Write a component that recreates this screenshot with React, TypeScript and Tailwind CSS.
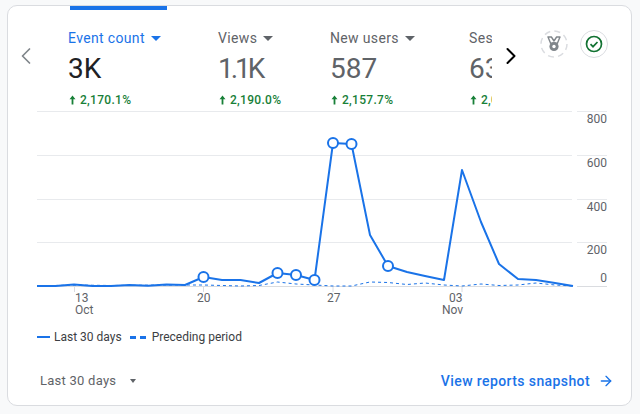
import React from 'react';
import { ArrowRight, ChevronLeft, ChevronRight } from 'lucide-react';

const tabs = [
  { label: 'Event count', value: '3K', change: '2,170.1%', width: 'w-[150px]', labelColor: 'text-[#1a73e8]', valueColor: 'text-[#202124]', caret: 'border-t-[#1a73e8]', tracking: '' },
  { label: 'Views', value: '1.1K', change: '2,190.0%', width: 'w-[112px]', labelColor: 'text-[#5f6368]', valueColor: 'text-[#5f6368]', caret: 'border-t-[#5f6368]', tracking: 'tracking-[-3px]' },
  { label: 'New users', value: '587', change: '2,157.7%', width: 'w-[139px]', labelColor: 'text-[#5f6368]', valueColor: 'text-[#5f6368]', caret: 'border-t-[#5f6368]', tracking: '' },
  { label: 'Sessions', value: '638', change: '2,056.7%', width: 'w-[139px]', labelColor: 'text-[#5f6368]', valueColor: 'text-[#5f6368]', caret: 'border-t-[#5f6368]', tracking: '' },
];

// points are in page coords, the svg starts at x=8, y=111
const current: [number, number][] = [
  [37, 286], [55.5, 286], [74, 284.5], [92.5, 286], [111, 286], [129.5, 285], [148, 285.7], [166.5, 284.5],
  [185, 285], [203.5, 277], [222, 280], [240.5, 280], [259, 283], [277.5, 273], [296, 275], [314.5, 280],
  [333, 143], [351.5, 144], [370, 235], [388, 266], [407, 272], [425, 276], [444, 280], [462, 170],
  [481, 222], [499, 264], [518, 279], [536, 280], [555, 283], [573, 286],
];
const preceding: [number, number][] = [
  [37, 286], [74, 285], [111, 285.5], [166.5, 285], [203.5, 285], [240.5, 286], [259, 285.5], [277.5, 282],
  [296, 284], [314.5, 285], [333, 286], [351.5, 286], [370, 282], [388, 282.5], [407, 284.5], [425, 283],
  [444, 285], [462, 286], [481, 284], [499, 285.5], [518, 285], [536, 283], [555, 285], [573, 286],
];
const markers = [9, 13, 14, 15, 16, 17, 19];
const grid = [111, 155, 199, 242, 286];
const yLabels = [['800', 123], ['600', 167], ['400', 211], ['200', 254], ['0', 282]] as const;

const toPoints = (pts: [number, number][]) => pts.map(([x, y]) => `${x - 8},${y - 111}`).join(' ');

function Chart() {
  return (
    <svg width="623" height="206" viewBox="0 0 623 206" className="block">
      {grid.map((y) => (
        <g key={y} stroke={y === 286 ? '#dadce0' : '#e8eaed'} strokeWidth="1">
          <line x1="29" x2="564" y1={y - 110.5} y2={y - 110.5} />
          <line x1="569" x2="599" y1={y - 110.5} y2={y - 110.5} />
        </g>
      ))}
      {[66.5, 195.5, 325, 454].map((x) => (
        <line key={x} x1={x} x2={x} y1="175" y2="181" stroke="#dadce0" />
      ))}
      <polyline points={toPoints(preceding)} fill="none" stroke="#1a73e8" strokeWidth="1" strokeDasharray="3 3" />
      <polyline points={toPoints(current)} fill="none" stroke="#1a73e8" strokeWidth="2" strokeLinejoin="round" />
      {markers.map((i) => (
        <circle key={i} cx={current[i][0] - 8} cy={current[i][1] - 111} r="5" fill="#fff" stroke="#1a73e8" strokeWidth="2" />
      ))}
      <g fontFamily="Roboto, sans-serif" fontSize="12" fill="#5f6368">
        {yLabels.map(([t, y]) => (
          <text key={t} x="599" y={y - 111} textAnchor="end">{t}</text>
        ))}
        <text x="67" y="191">13</text>
        <text x="67" y="203">Oct</text>
        <text x="189" y="191">20</text>
        <text x="319" y="191">27</text>
        <text x="441" y="191">03</text>
        <text x="434" y="203">Nov</text>
      </g>
    </svg>
  );
}

function MedalIcon() {
  return (
    <svg width="28" height="28" viewBox="0 0 28 28" fill="none">
      <circle cx="14" cy="14" r="13" stroke="#dadce0" strokeWidth="1.5" strokeDasharray="6 4.2" />
      <path d="M8 7h3.4l2.6 4 2.6-4H20l-2.6 6.2h-6.8z" stroke="#80868b" strokeWidth="1.4" strokeLinejoin="round" />
      <circle cx="14" cy="16.5" r="4.6" fill="#80868b" />
      <circle cx="14" cy="16.5" r="1.7" fill="#fff" />
    </svg>
  );
}

function CheckIcon() {
  return (
    <svg width="28" height="28" viewBox="0 0 28 28" fill="none">
      <circle cx="14" cy="14" r="13.5" stroke="#dadce0" fill="#fff" />
      <circle cx="14" cy="14" r="7.5" stroke="#137333" strokeWidth="1.7" />
      <path d="M10.5 14.2l2.5 2.5 4.5-4.7" stroke="#137333" strokeWidth="1.7" />
    </svg>
  );
}

function UpArrow() {
  return (
    <svg width="7" height="10" viewBox="0 0 7 10" className="shrink-0 ml-[1px]">
      <path d="M3.5 0.5L6.5 4.2H4.4V9.5H2.6V4.2H0.5z" fill="#188038" />
    </svg>
  );
}

export default function App() {
  return (
    <div className='w-[640px] h-[414px] bg-[#f8f9fa] pt-[5px] pl-[7px] overflow-hidden font-["Roboto",sans-serif]'>
      <div className="w-[625px] h-[401px] bg-white border border-[#dadce0] rounded-[10px] overflow-hidden">
        <div className="ml-[62px] w-[97px] h-1 bg-[#1a73e8]" />

        <div className="flex h-[101px]">
          <div className="w-[60px] pl-[4px] pt-[32px] text-[#80868b]">
            <ChevronLeft size={28} strokeWidth={1.5} />
          </div>

          <div className="flex w-[424px] overflow-hidden pt-[20px]">
            {tabs.map((t) => (
              <div key={t.label} className={`${t.width} shrink-0`}>
                <div className={`flex items-center h-[16px] text-[14px] tracking-[0.35px] ${t.labelColor}`}>
                  {t.label}
                  <span className={`ml-[6px] w-0 h-0 border-x-[5px] border-x-transparent border-t-[5px] ${t.caret}`} />
                </div>
                <div className={`mt-[5px] h-[36px] text-[28px] leading-[36px] ${t.tracking} ${t.valueColor}`}>{t.value}</div>
                <div className="mt-[5px] flex items-center gap-[4px] text-[12px] leading-[16px] tracking-[0.3px] font-medium text-[#188038]">
                  <UpArrow />
                  {t.change}
                </div>
              </div>
            ))}
          </div>

          <div className="w-[48px] pl-[5px] pt-[32px] text-black">
            <ChevronRight size={28} strokeWidth={1.7} />
          </div>

          <div className="flex gap-[12px] pt-[20px]">
            <MedalIcon />
            <CheckIcon />
          </div>
        </div>

        <Chart />

        <div className="flex items-center h-[20px] mt-[10px] ml-[29px] text-[12px] text-[#3c4043]">
          <span className="w-[13px] h-[2px] bg-[#1a73e8] mr-[4px]" />
          <span>Last 30 days</span>
          <span className="ml-[8px] mr-[6px] flex gap-[4px]">
            <span className="w-[6px] h-[3px] bg-[#1a73e8]" />
            <span className="w-[6px] h-[3px] bg-[#1a73e8]" />
          </span>
          <span>Preceding period</span>
        </div>

        <div className="flex items-center justify-between h-[24px] mt-[22px] ml-[32px] mr-[17px]">
          <div className="flex items-center text-[13px] tracking-[0.25px] text-[#5f6368]">
            Last 30 days
            <span className="ml-[14px] w-0 h-0 border-x-[3.5px] border-x-transparent border-t-[4px] border-t-[#5f6368]" />
          </div>
          <div className="flex items-center gap-[8px] text-[14px] tracking-[0.4px] font-medium text-[#1a73e8]">
            View reports snapshot
            <ArrowRight size={16} strokeWidth={2} />
          </div>
        </div>
      </div>
    </div>
  );
}
